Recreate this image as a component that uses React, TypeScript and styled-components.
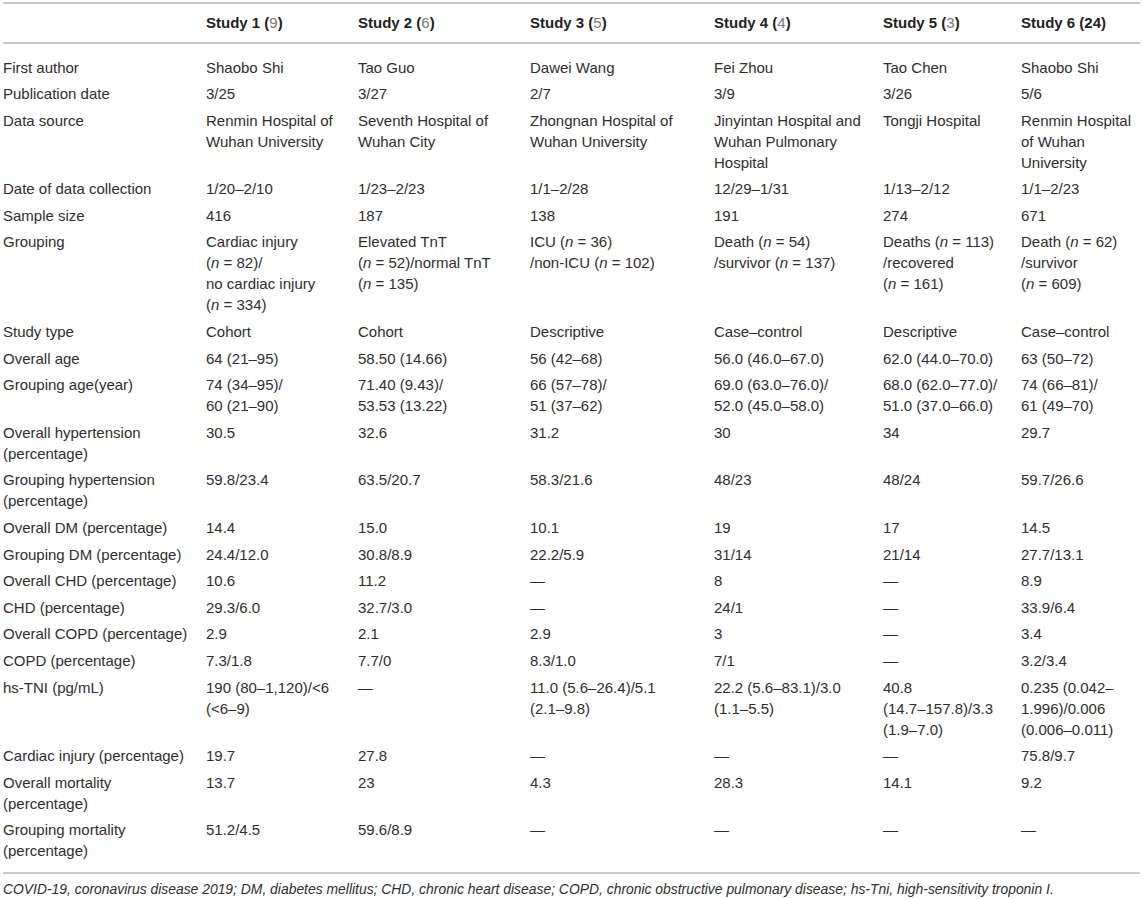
import React from "react";
import styled, { createGlobalStyle } from "styled-components";

const GlobalStyle = createGlobalStyle`
    body {
        margin: 0;
        background: #ffffff;
        font-family: "Liberation Sans", Arial, Helvetica, sans-serif;
        color: #2e2e2e;
    }
`;

interface Study {
    label: string;
    ref: string;
    refMuted: boolean;
}

type Cell = React.ReactNode[];

interface Row {
    label: string[];
    cells: Cell[];
}

const STUDIES: Study[] = [
    { label: "Study 1", ref: "9", refMuted: true },
    { label: "Study 2", ref: "6", refMuted: true },
    { label: "Study 3", ref: "5", refMuted: true },
    { label: "Study 4", ref: "4", refMuted: true },
    { label: "Study 5", ref: "3", refMuted: true },
    { label: "Study 6", ref: "24", refMuted: false },
];

// widths of label column + 6 study columns
const COL_WIDTHS = [203, 152, 172, 184, 169, 138, 119];

const N = ({ v }: { v: string }) => (
    <>
        (<i>n</i>{"\u00A0=\u00A0"}{v})
    </>
);

const DASH = "—";

const ROWS: Row[] = [
    { label: ["First author"], cells: [["Shaobo Shi"], ["Tao Guo"], ["Dawei Wang"], ["Fei Zhou"], ["Tao Chen"], ["Shaobo Shi"]] },
    { label: ["Publication date"], cells: [["3/25"], ["3/27"], ["2/7"], ["3/9"], ["3/26"], ["5/6"]] },
    {
        label: ["Data source"],
        cells: [
            ["Renmin Hospital of", "Wuhan University"],
            ["Seventh Hospital of", "Wuhan City"],
            ["Zhongnan Hospital of", "Wuhan University"],
            ["Jinyintan Hospital and", "Wuhan Pulmonary", "Hospital"],
            ["Tongji Hospital"],
            ["Renmin Hospital", "of Wuhan", "University"],
        ],
    },
    { label: ["Date of data collection"], cells: [["1/20–2/10"], ["1/23–2/23"], ["1/1–2/28"], ["12/29–1/31"], ["1/13–2/12"], ["1/1–2/23"]] },
    { label: ["Sample size"], cells: [["416"], ["187"], ["138"], ["191"], ["274"], ["671"]] },
    {
        label: ["Grouping"],
        cells: [
            ["Cardiac injury", <><N v="82" />/</>, "no cardiac injury", <N v="334" />],
            ["Elevated TnT", <><N v="52" />/normal TnT</>, <N v="135" />],
            [<>ICU <N v="36" /></>, <>/non-ICU <N v="102" /></>],
            [<>Death <N v="54" /></>, <>/survivor <N v="137" /></>],
            [<>Deaths <N v="113" /></>, "/recovered", <N v="161" />],
            [<>Death <N v="62" /></>, "/survivor", <N v="609" />],
        ],
    },
    { label: ["Study type"], cells: [["Cohort"], ["Cohort"], ["Descriptive"], ["Case–control"], ["Descriptive"], ["Case–control"]] },
    { label: ["Overall age"], cells: [["64 (21–95)"], ["58.50 (14.66)"], ["56 (42–68)"], ["56.0 (46.0–67.0)"], ["62.0 (44.0–70.0)"], ["63 (50–72)"]] },
    {
        label: ["Grouping age(year)"],
        cells: [
            ["74 (34–95)/", "60 (21–90)"],
            ["71.40 (9.43)/", "53.53 (13.22)"],
            ["66 (57–78)/", "51 (37–62)"],
            ["69.0 (63.0–76.0)/", "52.0 (45.0–58.0)"],
            ["68.0 (62.0–77.0)/", "51.0 (37.0–66.0)"],
            ["74 (66–81)/", "61 (49–70)"],
        ],
    },
    { label: ["Overall hypertension", "(percentage)"], cells: [["30.5"], ["32.6"], ["31.2"], ["30"], ["34"], ["29.7"]] },
    { label: ["Grouping hypertension", "(percentage)"], cells: [["59.8/23.4"], ["63.5/20.7"], ["58.3/21.6"], ["48/23"], ["48/24"], ["59.7/26.6"]] },
    { label: ["Overall DM (percentage)"], cells: [["14.4"], ["15.0"], ["10.1"], ["19"], ["17"], ["14.5"]] },
    { label: ["Grouping DM (percentage)"], cells: [["24.4/12.0"], ["30.8/8.9"], ["22.2/5.9"], ["31/14"], ["21/14"], ["27.7/13.1"]] },
    { label: ["Overall CHD (percentage)"], cells: [["10.6"], ["11.2"], [DASH], ["8"], [DASH], ["8.9"]] },
    { label: ["CHD (percentage)"], cells: [["29.3/6.0"], ["32.7/3.0"], [DASH], ["24/1"], [DASH], ["33.9/6.4"]] },
    { label: ["Overall COPD (percentage)"], cells: [["2.9"], ["2.1"], ["2.9"], ["3"], [DASH], ["3.4"]] },
    { label: ["COPD (percentage)"], cells: [["7.3/1.8"], ["7.7/0"], ["8.3/1.0"], ["7/1"], [DASH], ["3.2/3.4"]] },
    {
        label: ["hs-TNI (pg/mL)"],
        cells: [
            ["190 (80–1,120)/<6", "(<6–9)"],
            [DASH],
            ["11.0 (5.6–26.4)/5.1", "(2.1–9.8)"],
            ["22.2 (5.6–83.1)/3.0", "(1.1–5.5)"],
            ["40.8", "(14.7–157.8)/3.3", "(1.9–7.0)"],
            ["0.235 (0.042–", "1.996)/0.006", "(0.006–0.011)"],
        ],
    },
    { label: ["Cardiac injury (percentage)"], cells: [["19.7"], ["27.8"], [DASH], [DASH], [DASH], ["75.8/9.7"]] },
    { label: ["Overall mortality", "(percentage)"], cells: [["13.7"], ["23"], ["4.3"], ["28.3"], ["14.1"], ["9.2"]] },
    { label: ["Grouping mortality", "(percentage)"], cells: [["51.2/4.5"], ["59.6/8.9"], [DASH], [DASH], [DASH], [DASH]] },
];

const Page = styled.div`
    width: 1137px;
    padding: 2px 3px 0 3px;
`;

const Table = styled.table`
    width: 100%;
    border-collapse: collapse;
    table-layout: fixed;
    border-top: 2px solid #c8c8c8;
    font-size: 15px;
    line-height: 21px;
`;

const HeadCell = styled.th`
    text-align: left;
    font-weight: bold;
    color: #222;
    padding: 8px 4px 9px 0;
    border-bottom: 2px solid #c8c8c8;
    white-space: nowrap;
`;

const Ref = styled.span<{ $muted: boolean }>`
    color: ${({ $muted }) => ($muted ? "#777" : "inherit")};
    font-weight: ${({ $muted }) => ($muted ? "normal" : "bold")};
`;

const Body = styled.tbody`
    tr:first-of-type td {
        padding-top: 12.5px;
    }
    tr:last-of-type td {
        padding-bottom: 11px;
    }
`;

const Td = styled.td`
    vertical-align: top;
    padding: 2.8px 4px 2.8px 0;
    white-space: nowrap;
`;

const Line = styled.div`
    display: block;
`;

const Footnote = styled.p`
    margin: 0;
    border-top: 2px solid #c8c8c8;
    padding-top: 6px;
    font-size: 13.9px;
    line-height: 18px;
    font-style: italic;
    color: #2e2e2e;
`;

const Lines = ({ items }: { items: React.ReactNode[] }) => (
    <>
        {items.map((item, i) => (
            <Line key={i}>{item}</Line>
        ))}
    </>
);

const App: React.FC = () => {
    return (
        <Page>
            <GlobalStyle />
            <Table>
                <colgroup>
                    {COL_WIDTHS.map((w, i) => (
                        <col key={i} style={{ width: w }} />
                    ))}
                </colgroup>
                <thead>
                    <tr>
                        <HeadCell />
                        {STUDIES.map((s) => (
                            <HeadCell key={s.label}>
                                {s.label} (<Ref $muted={s.refMuted}>{s.ref}</Ref>)
                            </HeadCell>
                        ))}
                    </tr>
                </thead>
                <Body>
                    {ROWS.map((row, r) => (
                        <tr key={r}>
                            <Td>
                                <Lines items={row.label} />
                            </Td>
                            {row.cells.map((cell, c) => (
                                <Td key={c}>
                                    <Lines items={cell} />
                                </Td>
                            ))}
                        </tr>
                    ))}
                </Body>
            </Table>
            <Footnote>
                COVID-19, coronavirus disease 2019; DM, diabetes mellitus; CHD, chronic heart disease; COPD, chronic
                obstructive pulmonary disease; hs-Tni, high-sensitivity troponin I.
            </Footnote>
        </Page>
    );
};

export default App;
